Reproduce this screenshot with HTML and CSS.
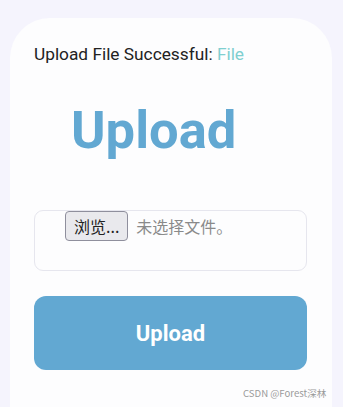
FILE: index.html
```html
<!DOCTYPE html>
<html>
<head>
<meta charset="utf-8">
<link rel="stylesheet" href="styles.css">
</head>
<body>
<div class="card">
  <p class="status">Upload File Successful: <span class="file">File</span></p>
  <h1 class="title">Upload</h1>
  <div class="dropbox">
    <span class="browse">浏览...</span>
    <span class="nofile">未选择文件。</span>
  </div>
  <button class="upload">Upload</button>
</div>
<div class="watermark">CSDN @Forest深林</div>
</body>
</html>
```
FILE: styles.css
```css
html, body {
  margin: 0;
  background: #f5f4fd;
  height: 100%;
  overflow: hidden;
}
body {
  padding: 18px 11px 0 10px;
  box-sizing: border-box;
  font-family: Roboto, "Noto Sans CJK SC", sans-serif;
}
.card {
  background: #fdfdfe;
  border-radius: 40px;
  height: 460px;
  padding: 26px 25px 0 24px;
  box-sizing: border-box;
}
.status {
  margin: 0;
  font-size: 17.3px;
  line-height: 21px;
  color: #222;
}
.file {
  color: #7fcfd0;
}
.title {
  margin: 35px 0 0 37px;
  font-size: 52.5px;
  line-height: 60px;
  font-weight: 700;
  color: #62a8d2;
}
.dropbox {
  margin-top: 50px;
  height: 61px;
  border: 1.5px solid #e6e6ee;
  border-radius: 9px;
  box-sizing: border-box;
  display: flex;
  align-items: flex-start;
  gap: 8px;
  padding-left: 30px;
}
.browse {
  font-family: "Noto Sans CJK SC", sans-serif;
  font-size: 16px;
  line-height: 28px;
  height: 30px;
  box-sizing: border-box;
  padding: 0 8px;
  background: #e9e9ed;
  border: 1px solid #8f8f9d;
  border-radius: 4px;
  color: #222;
}
.nofile {
  font-family: "Noto Sans CJK SC", sans-serif;
  font-size: 16px;
  line-height: 30px;
  color: #8a8a8a;
}
.upload {
  display: block;
  width: 273px;
  margin-top: 25px;
  height: 74px;
  border: none;
  border-radius: 12px;
  background: #62a8d2;
  color: #fff;
  font-family: Roboto, sans-serif;
  font-weight: 700;
  font-size: 22px;
}
.watermark {
  position: absolute;
  left: 243px;
  top: 386px;
  font-family: "Noto Sans CJK SC", sans-serif;
  font-size: 9.6px;
  color: #9a9a9a;
}
```
